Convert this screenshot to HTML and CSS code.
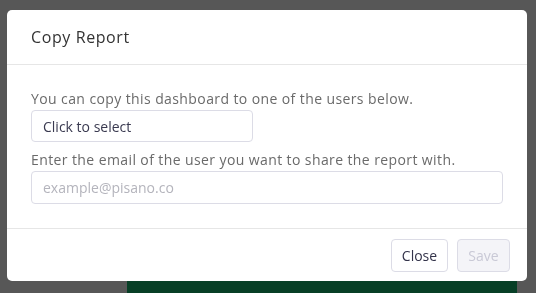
FILE: index.html
```html
<!DOCTYPE html>
<html lang="en">
<head>
    <meta charset="UTF-8">
    <title>Copy Report</title>
    <link rel="stylesheet" href="styles.css">
</head>
<body>
    <!-- Page behind the dimmed overlay -->
    <div class="backdrop-page">
        <div class="page-green"></div>
    </div>

    <!-- Modal -->
    <div class="overlay">
        <div class="modal">
            <div class="modal-header">
                <h5>Copy Report</h5>
            </div>
            <div class="modal-body">
                <p class="hint">You can copy this dashboard to one of the users below.</p>
                <div class="select-box">Click to select</div>
                <p class="hint hint-second">Enter the email of the user you want to share the report with.</p>
                <input type="text" class="email-input" placeholder="example@pisano.co">
            </div>
            <div class="modal-footer">
                <button class="btn btn-close">Close</button>
                <button class="btn btn-disabled" disabled>Save</button>
            </div>
        </div>
    </div>
</body>
</html>
```

FILE: styles.css
```css
body {
    margin: 0;
    padding: 0;
    font-family: 'Open Sans', sans-serif;
    background-color: #575757;
    height: 293px;
    overflow: hidden;
}

.backdrop-page {
    height: 100%;
    display: flex;
    flex-direction: column;
    justify-content: flex-end;
    padding-left: 127px;
    padding-right: 19px;
}

.page-green {
    height: 12px;
    background-color: #073f26;
}

.overlay {
    position: fixed;
    top: 0;
    left: 0;
    right: 0;
    bottom: 0;
    padding: 10px 9px 0 7px;
}

.modal {
    background-color: #ffffff;
    border-radius: 5px;
    width: 520px;
}

.modal-header {
    height: 55px;
    padding: 0 24px;
    display: flex;
    align-items: center;
    border-bottom: 1px solid #e6e6e6;
    box-sizing: border-box;
}

.modal-header h5 {
    margin: 0;
    font-family: 'Open Sans', sans-serif;
    font-size: 16px;
    font-weight: 400;
    letter-spacing: 0.6px;
    color: #333333;
}

.modal-body {
    padding: 25px 24px 24px;
    border-bottom: 1px solid #e6e6e6;
}

.hint {
    margin: 0 0 2px;
    font-size: 14px;
    line-height: 18px;
    letter-spacing: 0.4px;
    color: #6a6a6a;
}

.hint-second {
    margin-top: 9px;
}

.select-box {
    width: 222px;
    height: 32px;
    box-sizing: border-box;
    border: 1px solid #dcdce6;
    border-radius: 4px;
    padding: 0 11px;
    display: flex;
    align-items: center;
    font-size: 14px;
    color: #3a3a50;
}

.email-input {
    display: block;
    width: 472px;
    height: 33px;
    box-sizing: border-box;
    border: 1px solid #dcdce6;
    border-radius: 4px;
    padding: 0 11px;
    font-family: inherit;
    font-size: 14px;
    outline: none;
}

.email-input::placeholder {
    color: #b4b4bc;
}

.modal-footer {
    height: 52px;
    display: flex;
    justify-content: flex-end;
    align-items: center;
    gap: 9px;
    padding: 0 17px;
}

.btn {
    height: 33px;
    padding: 0;
    background-color: #ffffff;
    border: 1px solid #dcdce6;
    border-radius: 4px;
    font-family: inherit;
    font-size: 14px;
    color: #33334a;
}

.btn-close {
    width: 57px;
}

.btn-disabled {
    width: 53px;
    background-color: #f4f4f8;
    color: #c9c9d6;
}
```
